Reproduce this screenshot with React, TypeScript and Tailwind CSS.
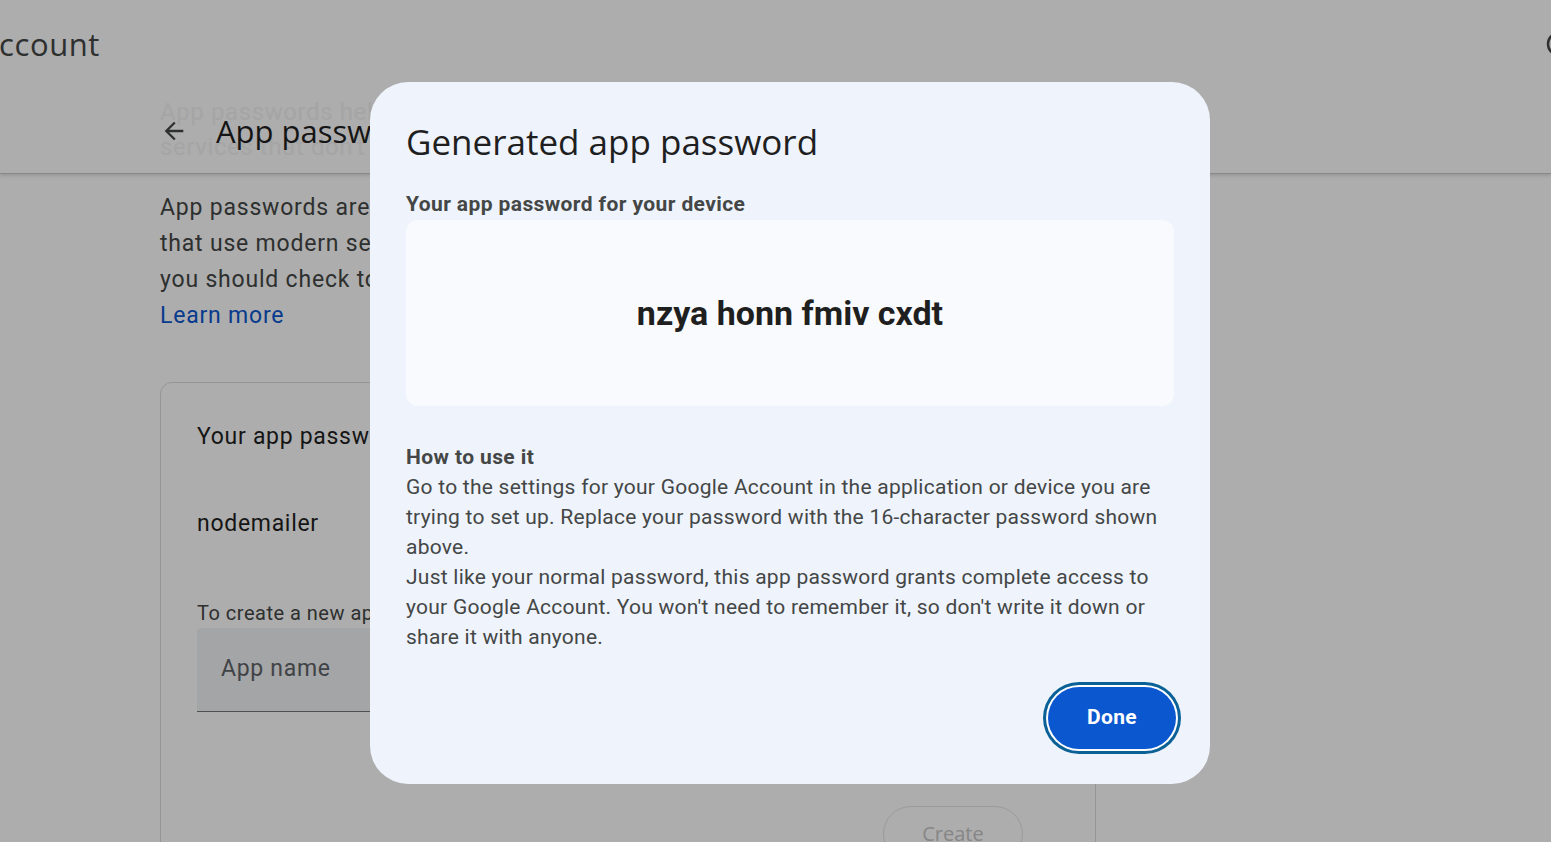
import React from "react";

function BackArrow() {
  return (
    <svg width="28" height="28" viewBox="0 0 24 24" className="text-[#444746]">
      <path fill="currentColor" d="M20 11H7.83l5.59-5.59L12 4l-8 8 8 8 1.41-1.41L7.83 13H20v-2z" />
    </svg>
  );
}

export default function App() {
  return (
    <div className="relative w-[1551px] h-[842px] overflow-hidden bg-white font-['Roboto',sans-serif]">
      {/* Page header */}
      <header className="relative h-[174px] border-b border-[#c9c9c9] shadow-[0_2px_3px_rgba(0,0,0,0.12)]">
        <div className="h-[88px] flex items-center justify-between">
          <span className="-ml-[1px] text-[31px] tracking-[0.6px] leading-none text-[#444746] font-['Open_Sans',sans-serif]">ccount</span>
          <div className="w-[5px] h-[26px] overflow-hidden">
            <svg width="26" height="26" viewBox="0 0 26 26">
              <circle cx="13" cy="13" r="11" fill="none" stroke="#444746" strokeWidth="2.5" />
            </svg>
          </div>
        </div>
        <div className="absolute left-[160px] top-[95px] text-[24px] tracking-[0.6px] leading-[35px] text-[#f3f3f3] whitespace-nowrap">
          <div>App passwords help you sign into your Google Account on older apps and</div>
          <div>services that don't support modern security standards.</div>
        </div>
        <div className="relative h-[86px] pl-[160px] flex items-center gap-[28px]">
          <BackArrow />
          <span className="text-[31px] text-[#1f1f1f] font-['Open_Sans',sans-serif]">App passwords</span>
        </div>
      </header>

      {/* Page body */}
      <main className="pl-[160px] pt-[16px]">
        <div className="text-[23px] tracking-[0.8px] leading-[36px] text-[#444746] whitespace-nowrap">
          <div>App passwords are less secure than using up-to-date apps and services</div>
          <div>that use modern security standards. Before you create an app password,</div>
          <div>you should check to see if your app needs this in order to sign in.</div>
          <div className="text-[#0b57d0]">Learn more</div>
        </div>

        <section className="mt-[48px] w-[936px] h-[600px] rounded-[12px] border border-[#dadce0] px-[36px]">
          <div className="mt-[39px] text-[23px] tracking-[0.7px] leading-[30px] text-[#1f1f1f]">Your app passwords</div>
          <div className="mt-[57px] text-[23px] tracking-[0.7px] leading-[30px] text-[#1f1f1f]">nodemailer</div>
          <div className="mt-[61px] text-[20px] tracking-[0.5px] leading-[26px] text-[#444746] whitespace-nowrap">To create a new app specific password, type a name for it below...</div>
          <div className="mt-[2px] h-[84px] rounded-t-[4px] bg-[#f2f3f5] border-b border-[#747775] flex items-center pl-[24px] text-[23px] tracking-[0.7px] text-[#5f6368]">
            App name
          </div>
          <div className="mt-[94px] flex justify-end mr-[36px]">
            <div className="w-[140px] h-[56px] rounded-full border border-[#e3e3e3] flex items-center justify-center text-[20px] text-[#c6c6c6] font-['Open_Sans',sans-serif]">
              Create
            </div>
          </div>
        </section>
      </main>

      {/* Scrim */}
      <div className="absolute inset-0 bg-black/[0.32]" />

      {/* Dialog */}
      <div className="absolute left-[370px] top-[82px] w-[840px] h-[702px] rounded-[38px] bg-[#eef3fc] pl-[36px] pr-[34px]">
        <h1 className="pt-[38px] text-[35px] leading-[44px] text-[#1f1f1f] font-['Open_Sans',sans-serif]">Generated app password</h1>
        <div className="mt-[27px] text-[21px] tracking-[0.4px] leading-[26px] font-bold text-[#444746]">Your app password for your device</div>
        <div className="mt-[3px] w-[768px] h-[186px] rounded-[12px] bg-[#f8fafd] flex items-center justify-center">
          <span className="text-[34px] font-bold text-[#1f1f1f]">nzya honn fmiv cxdt</span>
        </div>
        <div className="mt-[36px] text-[21px] tracking-[0.25px] leading-[30px] text-[#444746]">
          <div className="font-bold tracking-[0.4px]">How to use it</div>
          <div className="whitespace-nowrap">
            <div>Go to the settings for your Google Account in the application or device you are</div>
            <div>trying to set up. Replace your password with the 16-character password shown</div>
            <div>above.</div>
            <div>Just like your normal password, this app password grants complete access to</div>
            <div>your Google Account. You won't need to remember it, so don't write it down or</div>
            <div>share it with anyone.</div>
          </div>
        </div>
        <div className="mt-[35px] flex justify-end">
          <button className="w-[128px] h-[62px] rounded-full bg-[#0b57d0] text-white text-[21px] tracking-[0.3px] font-bold shadow-[0_0_0_2px_#ffffff,0_0_0_5px_#0b6196]">
            Done
          </button>
        </div>
      </div>
    </div>
  );
}
